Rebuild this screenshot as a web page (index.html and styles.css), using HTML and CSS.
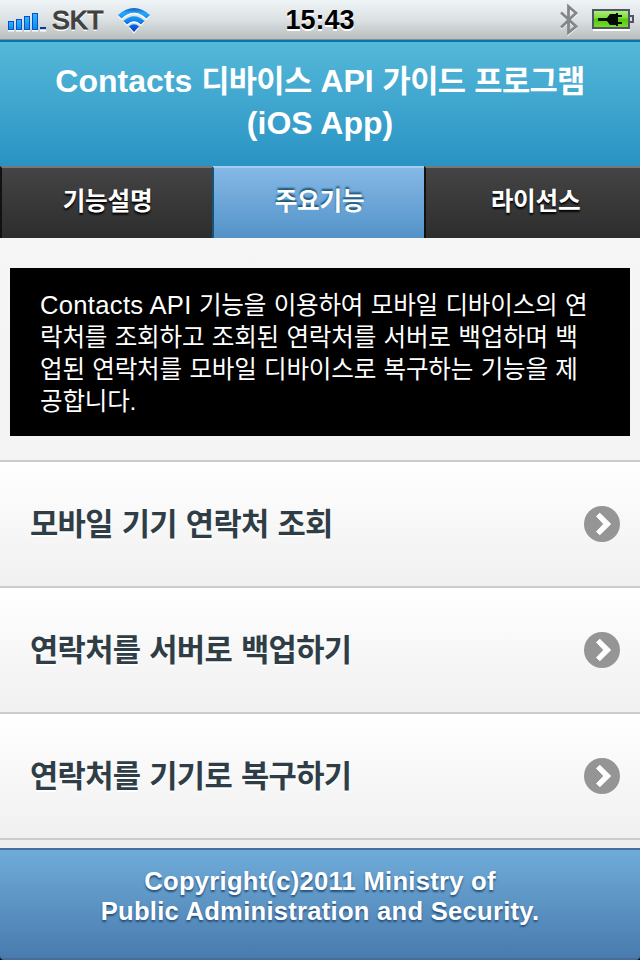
FILE: index.html
```html
<!DOCTYPE html>
<html lang="ko">
<head>
<meta charset="utf-8">
<title>Contacts 디바이스 API 가이드 프로그램</title>
<link rel="stylesheet" href="styles.css">
</head>
<body>
<div class="statusbar">
  <div class="carrier">
    <svg class="signal" width="40" height="20" viewBox="0 0 40 20">
      <defs><linearGradient id="sig" x1="0" y1="0" x2="0" y2="1"><stop offset="0" stop-color="#35b5fb"/><stop offset="1" stop-color="#078bf0"/></linearGradient></defs>
      <path d="M0 18.700h6M8 18.700h6M16 18.700h6M24 18.700h6M32 18.700h6" stroke="#fff" stroke-width="1.400"/>
      <g fill="url(#sig)" stroke="#0750cf"><rect x=".5" y="9.500" width="5" height="8"/><rect x="8.500" y="7.500" width="5" height="10"/><rect x="16.500" y="4.500" width="5" height="13"/><rect x="24.500" y="1.500" width="5" height="16"/></g>
      <rect x="32" y="15" width="6" height="2" fill="#0638b8"/>
    </svg>
    <span class="operator">SKT</span>
    <svg class="wifi" width="34" height="28" viewBox="0 0 34 28">
      <defs><linearGradient id="wf" gradientUnits="userSpaceOnUse" x1="0" y1="0" x2="0" y2="25"><stop offset="0" stop-color="#0750bd"/><stop offset=".25" stop-color="#28a8fa"/><stop offset=".6" stop-color="#0a80f0"/><stop offset="1" stop-color="#0636c5"/></linearGradient></defs>
      <g transform="translate(0 1.500)" fill="#fff"><path d="M1 8Q17-6 33 8L29.500 11.500Q17 0 4.500 11.500Z"/><path d="M6.500 14Q17 4.500 27.500 14L24 17.500Q17 11 10 17.500Z"/><path d="M12 19.500Q17 15 22 19.500L17 25Z"/></g>
      <g fill="url(#wf)"><path d="M1 8Q17-6 33 8L29.500 11.500Q17 0 4.500 11.500Z"/><path d="M6.500 14Q17 4.500 27.500 14L24 17.500Q17 11 10 17.500Z"/><path d="M12 19.500Q17 15 22 19.500L17 25Z"/></g>
    </svg>
  </div>
  <div class="clock">15:43</div>
  <div class="indicators">
    <svg class="bluetooth" width="20" height="34" viewBox="0 0 20 34">
      <path d="M2 10.500L17 24.500L9.500 31V5L17 11.500L2 25.500" fill="none" stroke="#fff" stroke-width="2.300"/>
      <path d="M2 9.500L17 23.500L9.500 29.500V3.500L17 10L2 24.500" fill="none" stroke="#858689" stroke-width="2.800"/>
    </svg>
    <svg class="battery" width="42" height="24" viewBox="0 0 42 24">
      <defs><linearGradient id="bt" x1="0" y1="0" x2="0" y2="1"><stop offset="0" stop-color="#b4ee84"/><stop offset=".45" stop-color="#77df36"/><stop offset=".5" stop-color="#55c50e"/><stop offset="1" stop-color="#79e026"/></linearGradient></defs>
      <path d="M1 21h37" stroke="#fff" stroke-width="2"/>
      <rect x="1" y="1" width="36" height="18" fill="url(#bt)" stroke="#505468" stroke-width="2"/>
      <path d="M38 7h3v6h-3" fill="#ddd" stroke="#505468" stroke-width="2"/>
      <path d="M6 9h9l3-4h6V4h2v2h4v2h-4v5h4v2h-4v2h-2v-1h-6l-3-4H6Z" fill="#050a02"/>
    </svg>
  </div>
</div>
<header class="header">
  <h1>Contacts <span class="ko">디바이스</span> API <span class="ko">가이드 프로그램</span><br>(iOS App)</h1>
</header>
<nav class="tabs">
  <a class="tab"><span>기능설명</span></a>
  <a class="tab active"><span>주요기능</span></a>
  <a class="tab"><span>라이선스</span></a>
</nav>
<main class="content">
  <p class="description">Contacts API <span class="ko">기능을 이용하여 모바일 디바이스의 연<br>락처를 조회하고 조회된 연락처를 서버로 백업하며 백<br>업된 연락처를 모바일 디바이스로 복구하는 기능을 제<br>공합니다.</span></p>
  <ul class="list">
    <li><span class="ko">모바일 기기 연락처 조회</span><svg class="arrow" width="36" height="36" viewBox="0 0 36 36"><circle cx="18" cy="18" r="18" fill="#959595"/><path d="M12.500 10.300L15.800 7.300L26.700 18L15.800 28.700L12.500 25.700L19.700 18Z" fill="#fff" stroke="#fff" stroke-linejoin="round"/></svg></li>
    <li><span class="ko">연락처를 서버로 백업하기</span><svg class="arrow" width="36" height="36" viewBox="0 0 36 36"><circle cx="18" cy="18" r="18" fill="#959595"/><path d="M12.500 10.300L15.800 7.300L26.700 18L15.800 28.700L12.500 25.700L19.700 18Z" fill="#fff" stroke="#fff" stroke-linejoin="round"/></svg></li>
    <li><span class="ko">연락처를 기기로 복구하기</span><svg class="arrow" width="36" height="36" viewBox="0 0 36 36"><circle cx="18" cy="18" r="18" fill="#959595"/><path d="M12.500 10.300L15.800 7.300L26.700 18L15.800 28.700L12.500 25.700L19.700 18Z" fill="#fff" stroke="#fff" stroke-linejoin="round"/></svg></li>
  </ul>
</main>
<footer class="footer">Copyright(c)2011 Ministry of<br>Public Administration and Security.</footer>
</body>
</html>
```
FILE: styles.css
```css
* { box-sizing: border-box; }
body {
  margin: 0;
  width: 640px;
  height: 960px;
  overflow: hidden;
  display: flex;
  flex-direction: column;
  font-family: "Liberation Sans", "Noto Sans CJK KR", sans-serif;
  background: #000;
}
svg { display: block; flex: none; }
.ko { font-size: 0.96em; letter-spacing: -0.022em; word-spacing: 0.035em; }
h1 .ko { line-height: 1; }
.statusbar {
  height: 40px;
  flex: none;
  display: grid;
  grid-template-columns: 1fr auto 1fr;
  background: linear-gradient(#eff4f6, #dce1e3 50%, #b9bec0);
  border-bottom: 1px solid #8d8d8b;
}
.carrier { display: flex; padding-left: 8px; }
.signal { margin-top: 12px; }
.operator {
  margin-left: 4px;
  font-size: 26.5px;
  line-height: 40px;
  -webkit-text-stroke: 1.2px #404040;
  color: #404040;
  text-shadow: 0 2px 0 #fff;
}
.wifi { margin: 7px 0 0 13px; }
.clock { font-size: 27px; font-weight: bold; line-height: 40px; text-shadow: 0 2px 0 #fff; }
.indicators { display: flex; justify-content: flex-end; padding-right: 6px; }
.bluetooth { margin-top: 3px; margin-right: 13px; }
.battery { margin-top: 9px; }
.header {
  height: 126px;
  flex: none;
  padding-top: 18px;
  border-top: 2px solid #0077b0;
  background: linear-gradient(#55b8d9, #2993c3);
  text-align: center;
  color: #fff;
}
h1 { margin: 0; font-size: 32px; line-height: 42px; font-weight: bold; }
.tabs { height: 72px; flex: none; display: grid; grid-template-columns: 212px 212px 216px; }
.tab {
  border-left: 2px solid #111;
  border-top: 2px solid #777;
  background: linear-gradient(#444, #2d2d2d);
  color: #fff;
  font-size: 24.6px;
  font-weight: bold;
  line-height: 67px;
  letter-spacing: -0.200px;
  text-align: center;
  padding-left: 1px;
  text-shadow: 0 2px 2px #000;
}
.tab:last-child { padding-left: 5px; }
.tab.active {
  border-left-color: #155378;
  border-top-color: #a5cdee;
  background: linear-gradient(#85b8e6, #5393c8);
  text-shadow: 0 -2px 2px #145072;
}
.content { flex: none; height: 610px; padding-top: 30px; background: linear-gradient(#f6f6f6, #eee); }
.description {
  margin: 0 10px 24px;
  height: 168px;
  padding: 21px 30px;
  background: #000;
  color: #fff;
  font-size: 25.6px;
  line-height: 32px;
  letter-spacing: 0.3px;
  white-space: nowrap;
}
.description .ko { letter-spacing: -0.008em; line-height: 1; }
.list { list-style: none; margin: 0; padding: 0; border-bottom: 2px solid #ccc; }
.list li {
  height: 126px;
  display: flex;
  align-items: center;
  justify-content: space-between;
  padding: 0 20px 0 30px;
  border-top: 2px solid #ccc;
  background: linear-gradient(#fff, #f0f0f0);
  color: #2f3e46;
  font-size: 32px;
  font-weight: bold;
  text-shadow: 0 2px 0 #fff;
}
.list .ko { padding-bottom: 5px; }
.footer {
  height: 112px;
  flex: none;
  padding-top: 16px;
  background: linear-gradient(#6facd9, #497bae);
  border-top: 2px solid #456f9a;
  border-bottom: 2px solid #456f9a;
  border-radius: 0 0 4px 4px;
  color: #fff;
  font-size: 25.6px;
  font-weight: bold;
  line-height: 30px;
  letter-spacing: 0.26px;
  text-align: center;
  text-shadow: 0 2px 2px #254f7b;
}
```
